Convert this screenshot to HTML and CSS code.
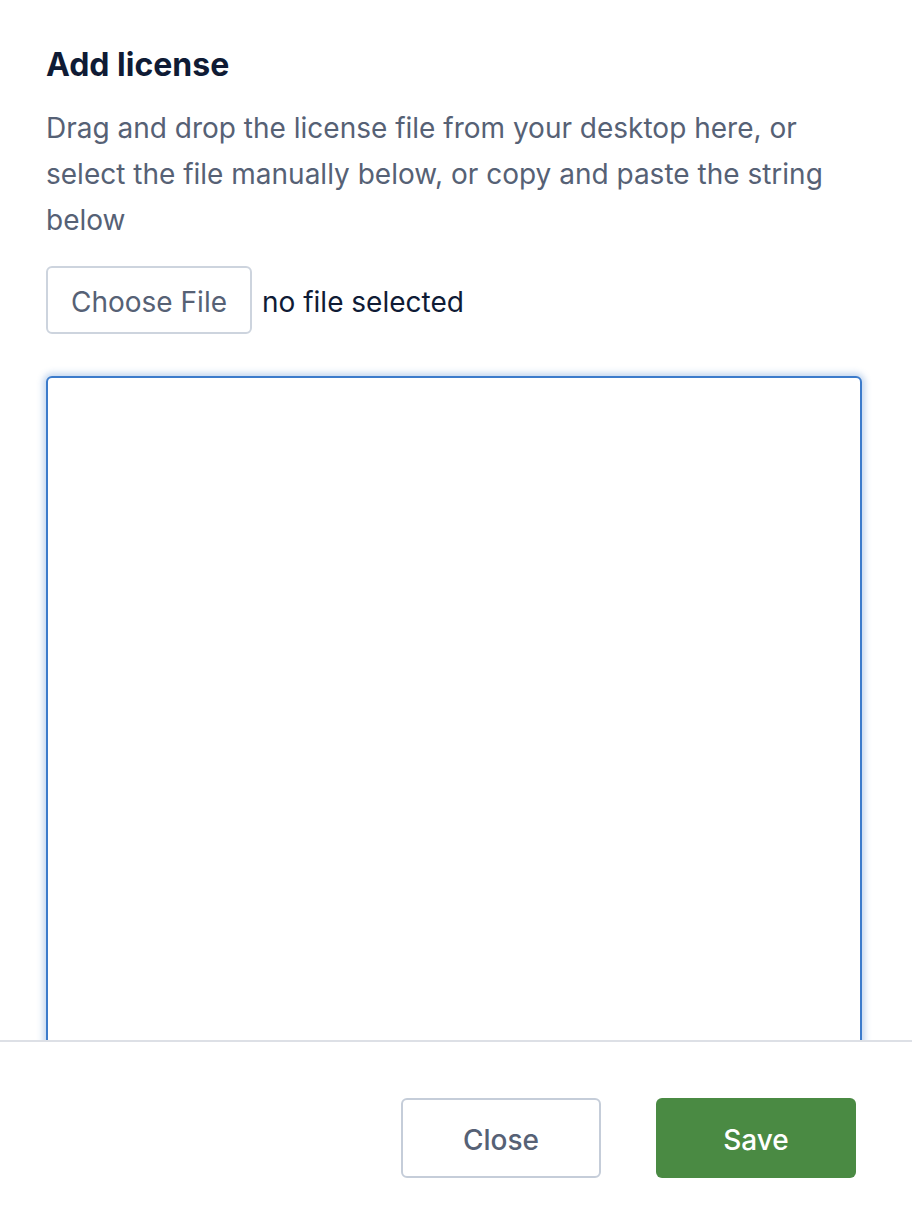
FILE: index.html
```html
<!DOCTYPE html>
<html>
<head>
<meta charset="utf-8">
<link rel="stylesheet" href="styles.css">
</head>
<body>
<div class="modal">
  <div class="content">
    <h2 class="title">Add license</h2>
    <p class="desc">Drag and drop the license file from your desktop here, or select the file manually below, or copy and paste the string below</p>
    <div class="file-row">
      <button class="file-btn">Choose File</button>
      <span class="file-name">no file selected</span>
    </div>
    <textarea class="license-input"></textarea>
  </div>
  <div class="footer">
    <button class="btn btn-close">Close</button>
    <button class="btn btn-save">Save</button>
  </div>
</div>
</body>
</html>
```
FILE: styles.css
```css
html, body {
  margin: 0;
  padding: 0;
  background: #ffffff;
}
body {
  font-family: Inter, "Noto Sans", sans-serif;
}
.modal {
  width: 912px;
  height: 1226px;
  display: flex;
  flex-direction: column;
  background: #fff;
}
.content {
  flex: 1;
  overflow: hidden;
  padding: 0 50px 0 46px;
  min-height: 0;
}
.title {
  margin: 45px 0 0;
  font-size: 32px;
  line-height: 40px;
  font-weight: 700;
  color: #0f1b35;
}
.desc {
  margin: 20px 0 0;
  font-size: 28px;
  line-height: 46px;
  color: #566175;
}
.file-row {
  display: flex;
  align-items: center;
  gap: 10px;
  margin-top: 23px;
}
.file-btn {
  width: 206px;
  height: 68px;
  border: 2px solid #cdd4de;
  border-radius: 6px;
  background: #fff;
  font-family: Inter, "Noto Sans", sans-serif;
  font-size: 28px;
  color: #566175;
  padding: 3px 0 0;
}
.file-name {
  font-size: 28px;
  color: #0f1b35;
  padding-top: 3px;
}
.license-input {
  display: block;
  box-sizing: border-box;
  width: 816px;
  height: 900px;
  margin-top: 42px;
  border: 2px solid #3b7bcb;
  border-radius: 6px;
  box-shadow: 0 0 6px 3px rgba(59, 123, 203, 0.3);
  outline: none;
  resize: none;
}
.footer {
  flex: none;
  height: 186px;
  box-sizing: border-box;
  border-top: 2px solid #dde0e6;
  display: flex;
  justify-content: flex-end;
  align-items: flex-start;
  gap: 55px;
  padding: 56px 56px 0 0;
}
.btn {
  width: 200px;
  height: 80px;
  border-radius: 6px;
  font-family: Inter, "Noto Sans", sans-serif;
  font-size: 28px;
  font-weight: 500;
  box-sizing: border-box;
  padding: 3px 0 0;
}
.btn-close {
  background: #fff;
  border: 2px solid #c5cdd9;
  color: #566175;
}
.btn-save {
  background: #4a8a43;
  border: none;
  color: #fff;
}
```
